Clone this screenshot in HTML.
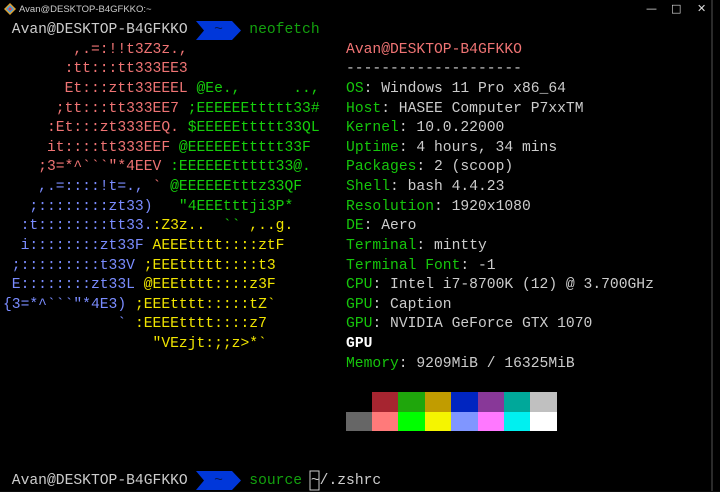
<!DOCTYPE html>
<html><head><meta charset="utf-8"><style>
html,body{margin:0;padding:0;background:#0c0c0c;}
body{width:720px;height:491px;overflow:hidden;position:relative;background:#000;font-family:"Liberation Mono",monospace;}
.title{position:absolute;left:0;top:0;width:720px;height:19px;background:#000;color:#ccc;font-family:"Liberation Sans",sans-serif;font-size:9.5px;}
.title span{position:absolute;left:19px;top:4px;}
.ctl{position:absolute;top:2px;font-size:11px;color:#ddd;font-family:"DejaVu Sans",sans-serif;}
pre{position:absolute;left:3px;top:21px;margin:0;font-family:"Liberation Mono",monospace;font-size:14.67px;line-height:19.62px;color:#ccc;white-space:pre;}
.r{color:#f07474}.g{color:#16d00c}.b{color:#7a8cff}.y{color:#f0e400}.l{color:#16c60c}.w{color:#fff;font-weight:bold}.t{color:#f07474}.n{color:#13a10e}.k{color:#0a1a50}
.sw{position:absolute;width:26.4px;height:19.6px;}
</style></head><body>
<div class="title">
<svg style="position:absolute;left:4px;top:3px" width="12" height="12" viewBox="0 0 12 12"><polygon points="6,0 12,6 6,12 0,6" fill="#e0a030"/><polygon points="6,2 10,6 6,10 2,6" fill="#40a0e0"/><polygon points="6,4 8,6 6,8 4,6" fill="#e04040"/></svg>
<span>Avan@DESKTOP-B4GFKKO:~</span>
<div class="ctl" style="left:646px">&#8212;</div>
<div class="ctl" style="left:671px">&#9633;</div>
<div class="ctl" style="left:697px">&#10005;</div>
</div>
<svg style="position:absolute;left:0;top:0" width="720" height="491">
<polygon points="196,21 232,21 241,30.5 232,40 196,40 204,30.5" fill="#0037da"/>
<polygon points="196,471 232,471 241,480.5 232,490 196,490 204,480.5" fill="#0037da"/>
<rect x="711" y="0" width="2" height="491" fill="#2a2a2a"/>
<rect x="310" y="471" width="9" height="19" fill="none" stroke="#ccc" stroke-width="1"/>
</svg>
<pre> Avan@DESKTOP-B4GFKKO   <span class="k">~</span>   <span class="n">neofetch</span>
<span class="r">        ,.=:!!t3Z3z.,</span>                  <span class="t">Avan@DESKTOP-B4GFKKO</span>
<span class="r">       :tt:::tt333EE3</span>                  --------------------
<span class="r">       Et:::ztt33EEEL</span> <span class="g">@Ee.,      ..,</span>   <span class="l">OS</span>: Windows 11 Pro x86_64
<span class="r">      ;tt:::tt333EE7</span> <span class="g">;EEEEEEttttt33#</span>   <span class="l">Host</span>: HASEE Computer P7xxTM
<span class="r">     :Et:::zt333EEQ.</span> <span class="g">$EEEEEttttt33QL</span>   <span class="l">Kernel</span>: 10.0.22000
<span class="r">     it::::tt333EEF</span> <span class="g">@EEEEEEttttt33F</span>    <span class="l">Uptime</span>: 4 hours, 34 mins
<span class="r">    ;3=*^&#96;&#96;&#96;"*4EEV</span> <span class="g">:EEEEEEttttt33@.</span>    <span class="l">Packages</span>: 2 (scoop)
<span class="b">    ,.=::::!t=., </span><span class="r">&#96;</span> <span class="g">@EEEEEEtttz33QF</span>     <span class="l">Shell</span>: bash 4.4.23
<span class="b">   ;::::::::zt33)</span>   <span class="g">"4EEEtttji3P*</span>      <span class="l">Resolution</span>: 1920x1080
<span class="b">  :t::::::::tt33.</span><span class="y">:Z3z..  </span><span class="g">&#96;&#96;</span><span class="y"> ,..g.</span>      <span class="l">DE</span>: Aero
<span class="b">  i::::::::zt33F</span> <span class="y">AEEEtttt::::ztF</span>       <span class="l">Terminal</span>: mintty
<span class="b"> ;:::::::::t33V</span> <span class="y">;EEEttttt::::t3</span>        <span class="l">Terminal Font</span>: -1
<span class="b"> E::::::::zt33L</span> <span class="y">@EEEtttt::::z3F</span>        <span class="l">CPU</span>: Intel i7-8700K (12) @ 3.700GHz
<span class="b">{3=*^&#96;&#96;&#96;"*4E3)</span> <span class="y">;EEEtttt:::::tZ&#96;</span>        <span class="l">GPU</span>: Caption
<span class="b">             &#96;</span> <span class="y">:EEEEtttt::::z7</span>         <span class="l">GPU</span>: NVIDIA GeForce GTX 1070
<span class="y">                 "VEzjt:;;z&gt;*&#96;</span>         <span class="w">GPU</span>
                                       <span class="l">Memory</span>: 9209MiB / 16325MiB





 Avan@DESKTOP-B4GFKKO   <span class="k">~</span>   <span class="n">source</span> ~/.zshrc</pre>
<div class="sw" style="left:372px;top:392px;background:#a62530"></div>
<div class="sw" style="left:398.4px;top:392px;background:#1fa60c"></div>
<div class="sw" style="left:424.8px;top:392px;background:#c19c00"></div>
<div class="sw" style="left:451.2px;top:392px;background:#0025c0"></div>
<div class="sw" style="left:477.6px;top:392px;background:#883898"></div>
<div class="sw" style="left:504px;top:392px;background:#00a89a"></div>
<div class="sw" style="left:530.4px;top:392px;background:#c0c0c0"></div>
<div class="sw" style="left:345.6px;top:411.6px;background:#666"></div>
<div class="sw" style="left:372px;top:411.6px;background:#ff7a7a"></div>
<div class="sw" style="left:398.4px;top:411.6px;background:#00ff00"></div>
<div class="sw" style="left:424.8px;top:411.6px;background:#f5f500"></div>
<div class="sw" style="left:451.2px;top:411.6px;background:#8096ff"></div>
<div class="sw" style="left:477.6px;top:411.6px;background:#ff78ff"></div>
<div class="sw" style="left:504px;top:411.6px;background:#00f0f0"></div>
<div class="sw" style="left:530.4px;top:411.6px;background:#fff"></div>
</body></html>
